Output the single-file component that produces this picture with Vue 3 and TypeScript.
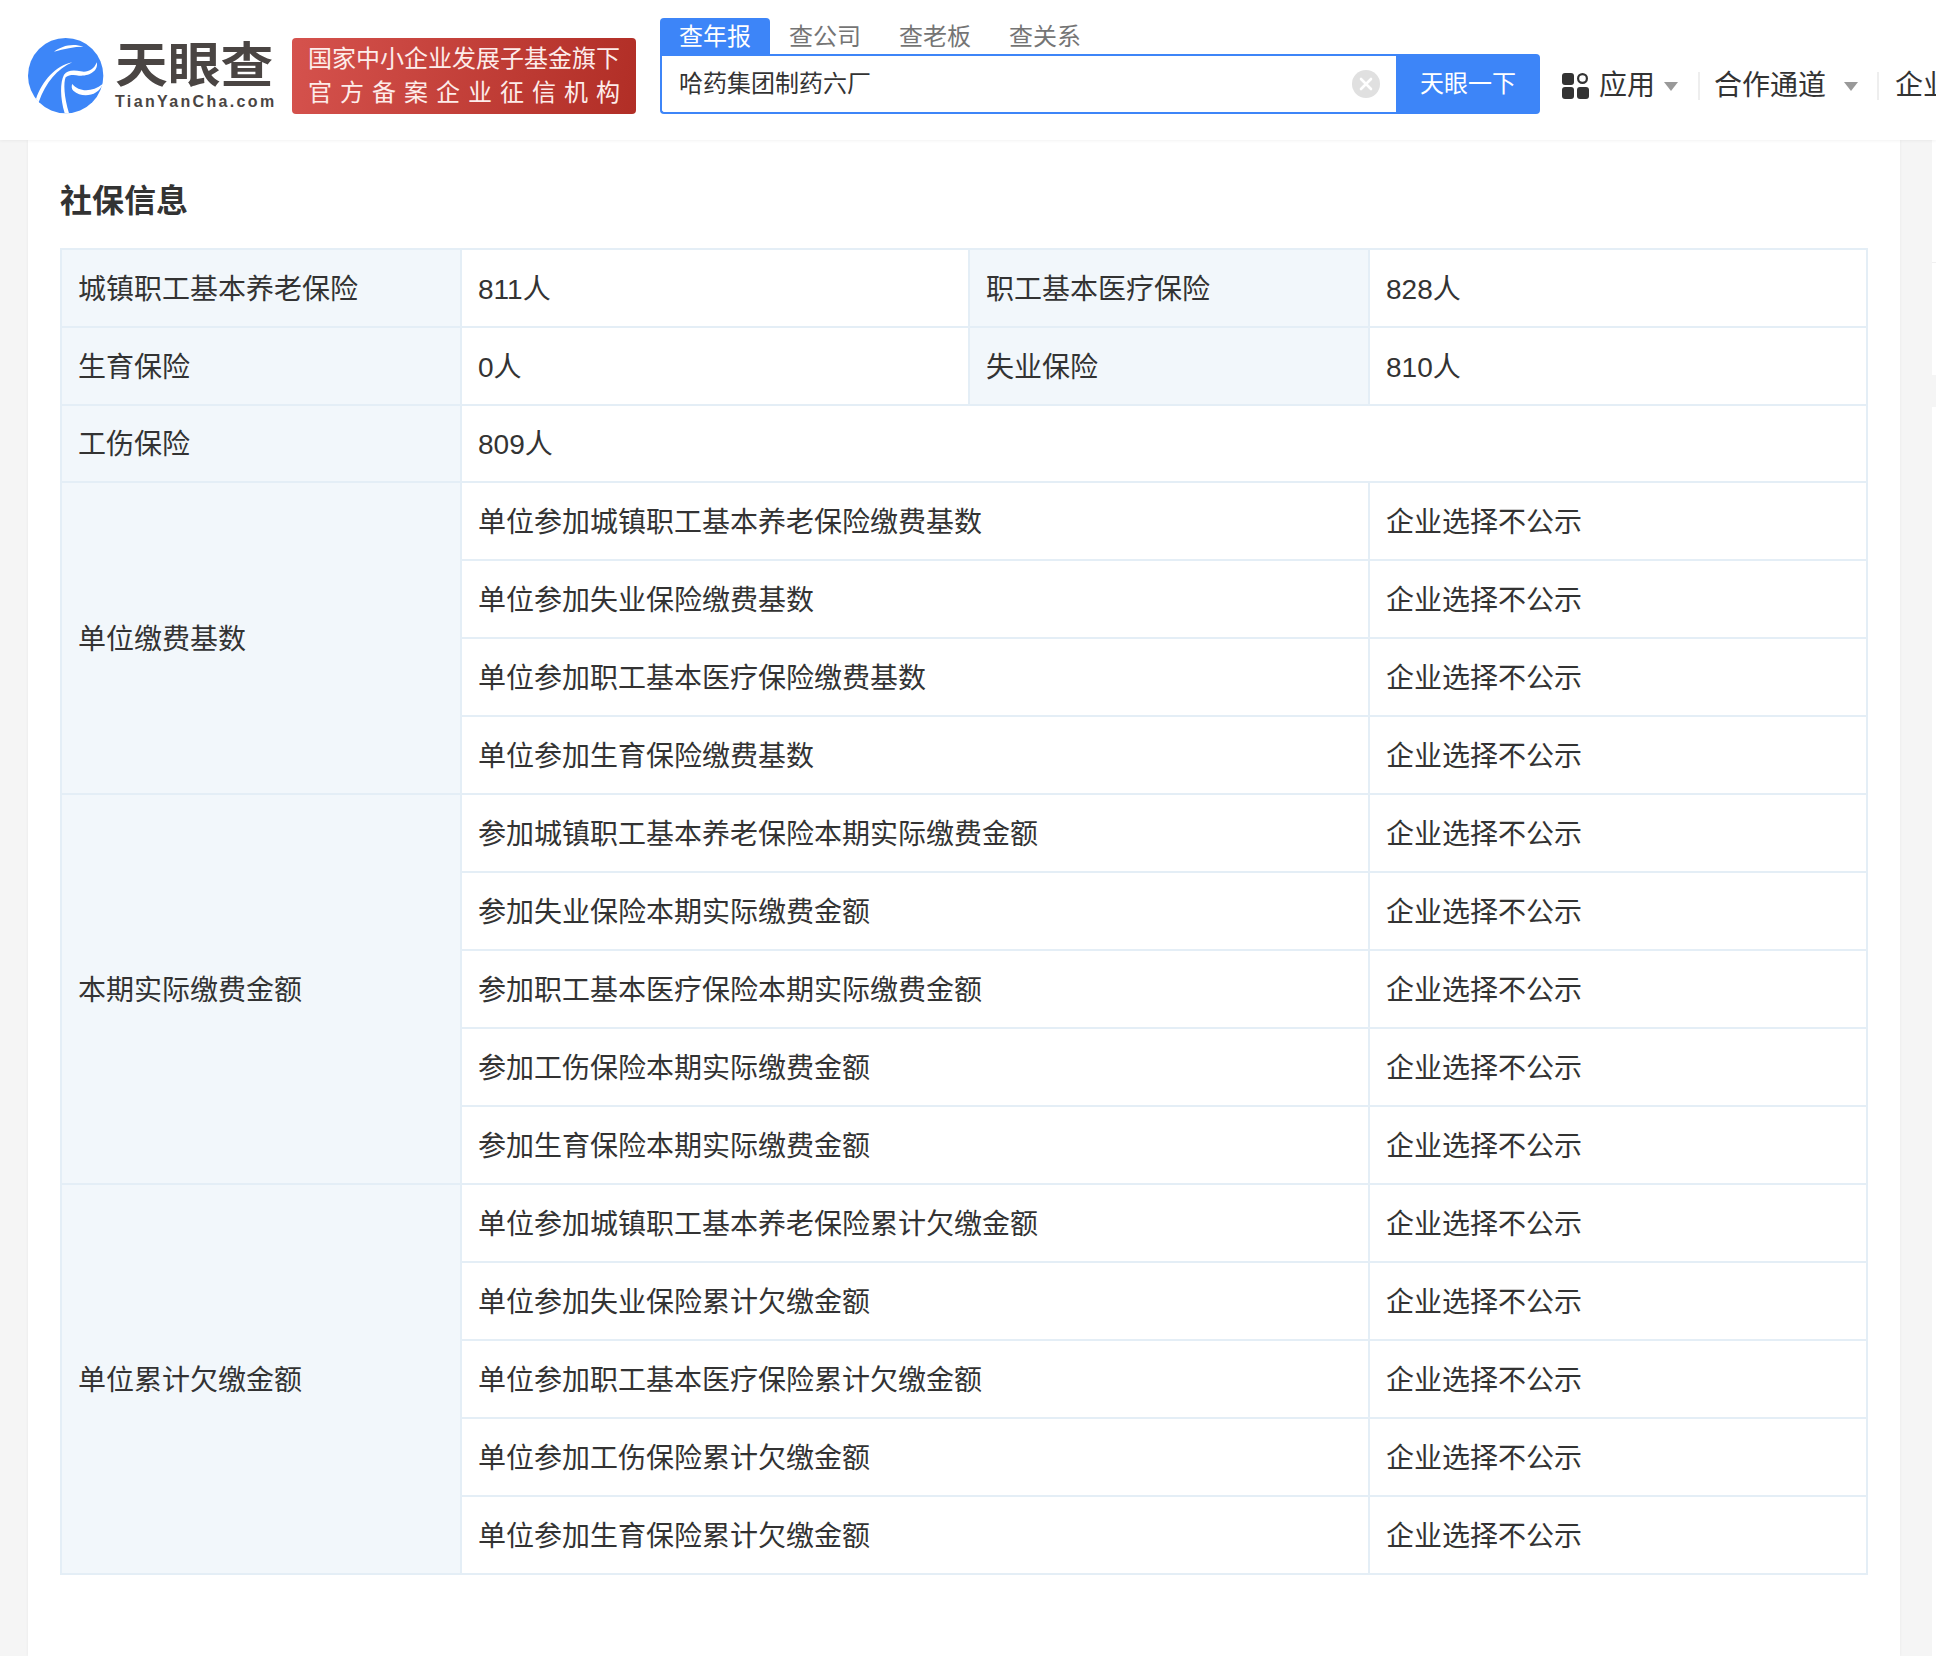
<script setup lang="ts">
interface Row { label?: string; span?: number; name: string; value: string }
const groups: { label: string; items: string[] }[] = [
  { label: '单位缴费基数', items: ['单位参加城镇职工基本养老保险缴费基数', '单位参加失业保险缴费基数', '单位参加职工基本医疗保险缴费基数', '单位参加生育保险缴费基数'] },
  { label: '本期实际缴费金额', items: ['参加城镇职工基本养老保险本期实际缴费金额', '参加失业保险本期实际缴费金额', '参加职工基本医疗保险本期实际缴费金额', '参加工伤保险本期实际缴费金额', '参加生育保险本期实际缴费金额'] },
  { label: '单位累计欠缴金额', items: ['单位参加城镇职工基本养老保险累计欠缴金额', '单位参加失业保险累计欠缴金额', '单位参加职工基本医疗保险累计欠缴金额', '单位参加工伤保险累计欠缴金额', '单位参加生育保险累计欠缴金额'] }
]
const rows: Row[] = groups.flatMap((g) =>
  g.items.map((name, i) => ({
    label: i === 0 ? g.label : undefined,
    span: i === 0 ? g.items.length : undefined,
    name,
    value: '企业选择不公示'
  }))
)
const tabs = ['查年报', '查公司', '查老板', '查关系']
</script>

<template>
  <div class="page">
    <header class="header">
      <div class="logo">
        <svg class="logo-mark" viewBox="0 0 252 252" width="84" height="84">
          <circle cx="125" cy="125" r="113" fill="#3d86f8" />
          <path fill="#fff" d="M90 53C112 36 145 26 178 38C150 38 120 44 90 53Z" />
          <path fill="#fff" d="M36 195C55 140 95 95 145 85C100 105 65 145 44 205Z" />
          <path fill="#fff" d="M218 85C225 110 195 128 165 125C150 122 135 122 125 130C118 145 120 190 135 238L122 238C108 190 108 145 120 122C130 108 150 108 170 112C190 116 210 108 218 85Z" />
          <path fill="#fff" d="M145 150C165 175 205 175 236 150C225 185 175 195 148 170C142 165 142 155 145 150Z" />
        </svg>
        <div class="logo-text">
          <div class="logo-cn">天眼查</div>
          <div class="logo-en">TianYanCha.com</div>
        </div>
      </div>
      <div class="badge">
        <div class="badge-line">国家中小企业发展子基金旗下</div>
        <div class="badge-line">官方备案企业征信机构</div>
      </div>
      <div class="search">
        <div class="tabs">
          <div v-for="(t, i) in tabs" :key="t" class="tab" :class="{ active: i === 0 }">{{ t }}</div>
        </div>
        <div class="box">
          <div class="input">
            <span class="query">哈药集团制药六厂</span>
            <svg class="clear" viewBox="0 0 28 28" width="28" height="28">
              <circle cx="14" cy="14" r="14" fill="#e0e0e0" />
              <path d="M9 9L19 19M19 9L9 19" stroke="#fff" stroke-width="2.6" stroke-linecap="round" />
            </svg>
          </div>
          <div class="btn">天眼一下</div>
        </div>
      </div>
      <nav class="nav">
        <svg class="apps" viewBox="0 0 27 26" width="27" height="26">
          <rect x="0" y="0" width="12" height="12" rx="3" fill="#333" />
          <circle cx="20.5" cy="5.5" r="4.4" fill="none" stroke="#333" stroke-width="2.2" />
          <rect x="0" y="14" width="12" height="12" rx="3" fill="#333" />
          <rect x="15" y="14" width="12" height="12" rx="3" fill="#333" />
        </svg>
        <span class="nav-text first">应用</span>
        <i class="caret"></i>
        <i class="divider"></i>
        <span class="nav-text second">合作通道</span>
        <i class="caret wide"></i>
        <i class="divider last"></i>
        <span class="nav-text third">企业</span>
      </nav>
    </header>
    <div class="main">
      <section class="card">
        <h2 class="title">社保信息</h2>
        <table class="table">
          <colgroup>
            <col class="c1" />
            <col class="c2" />
            <col class="c3" />
            <col class="c4" />
          </colgroup>
          <tbody>
            <tr>
              <td class="label">城镇职工基本养老保险</td>
              <td>811人</td>
              <td class="label">职工基本医疗保险</td>
              <td>828人</td>
            </tr>
            <tr>
              <td class="label">生育保险</td>
              <td>0人</td>
              <td class="label">失业保险</td>
              <td>810人</td>
            </tr>
            <tr class="short">
              <td class="label">工伤保险</td>
              <td colspan="3">809人</td>
            </tr>
            <tr v-for="r in rows" :key="r.name">
              <td v-if="r.label" class="label" :rowspan="r.span">{{ r.label }}</td>
              <td colspan="2">{{ r.name }}</td>
              <td>{{ r.value }}</td>
            </tr>
          </tbody>
        </table>
      </section>
      <aside class="aside">
        <div class="side-block first"></div>
        <div class="side-block second"></div>
        <div class="side-block third"></div>
      </aside>
    </div>
  </div>
</template>

<style scoped>
.page {
  width: 1936px;
  height: 1656px;
  overflow: hidden;
  background: #f5f5f5;
  font-family: "Liberation Sans", "Noto Sans CJK SC", sans-serif;
  color: #333;
}
.header {
  height: 140px;
  box-sizing: border-box;
  background: #fff;
  display: flex;
  align-items: flex-start;
  padding-left: 24px;
  white-space: nowrap;
  overflow: hidden;
  box-shadow: 0 1px 3px rgba(0, 0, 0, 0.05);
  position: relative;
}
.logo {
  display: flex;
  margin-top: 34px;
  width: 249px;
  flex: none;
}
.logo-mark {
  flex: none;
}
.logo-text {
  margin-left: 7px;
  width: 158px;
  color: #4a4543;
}
.logo-cn {
  font-size: 48px;
  line-height: 48px;
  height: 48px;
  margin-top: 3px;
  font-weight: 700;
  transform: scaleX(1.1);
  transform-origin: left center;
  font-family: "Noto Sans CJK SC", sans-serif;
}
.logo-en {
  margin-top: 7px;
  font-size: 16px;
  line-height: 20px;
  font-weight: 700;
  letter-spacing: 2.35px;
}
.badge {
  flex: none;
  width: 344px;
  height: 76px;
  box-sizing: border-box;
  margin-top: 38px;
  margin-left: 19px;
  padding: 4px 16px 0;
  border-radius: 4px;
  background: linear-gradient(100deg, #d5524d, #b12e26);
  color: #fdecea;
}
.badge-line {
  font-size: 24px;
  line-height: 34px;
  text-align: justify;
  text-align-last: justify;
}
.search {
  flex: none;
  width: 880px;
  margin-top: 18px;
  margin-left: 24px;
}
.tabs {
  display: flex;
  height: 36px;
}
.tab {
  width: 110px;
  height: 36px;
  font-size: 24px;
  line-height: 38px;
  text-align: center;
  color: #757575;
  border-radius: 4px 4px 0 0;
}
.tab.active {
  background: #3d85f8;
  color: #fff;
}
.box {
  display: flex;
  height: 60px;
}
.input {
  flex: 1;
  box-sizing: border-box;
  border: 2px solid #3d85f8;
  border-right: 0;
  border-radius: 0 0 0 4px;
  display: flex;
  align-items: center;
  justify-content: space-between;
  padding: 0 16px 0 17px;
  background: #fff;
}
.query {
  font-size: 24px;
  line-height: 30px;
  color: #333;
}
.btn {
  width: 144px;
  flex: none;
  background: #3d85f8;
  color: #fff;
  font-size: 24px;
  line-height: 60px;
  text-align: center;
  border-radius: 0 4px 4px 0;
}
.nav {
  flex: none;
  margin-left: 22px;
  margin-top: 71px;
  height: 30px;
  display: flex;
  align-items: center;
}
.apps {
  flex: none;
}
.nav-text {
  font-size: 28px;
  line-height: 30px;
  color: #333;
}
.nav-text.first {
  margin-left: 10px;
}
.nav-text.second {
  margin-left: 14px;
}
.nav-text.third {
  margin-left: 16px;
}
.caret {
  flex: none;
  width: 0;
  height: 0;
  margin-left: 9px;
  border-left: 7px solid transparent;
  border-right: 7px solid transparent;
  border-top: 9px solid #999;
}
.caret.wide {
  margin-left: 18px;
}
.divider {
  flex: none;
  width: 2px;
  height: 28px;
  margin-left: 20px;
  background: #eee;
}
.divider.last {
  margin-left: 19px;
}
.main {
  display: flex;
  height: 1516px;
  padding-left: 28px;
}
.card {
  flex: none;
  width: 1872px;
  box-sizing: border-box;
  padding: 41px 32px 0;
  background: #fff;
  box-shadow: 0 0 3px rgba(0, 0, 0, 0.06);
}
.title {
  margin: 0 0 27px;
  font-size: 32px;
  line-height: 40px;
  font-weight: 700;
  color: #333;
}
.table {
  width: 1806px;
  table-layout: fixed;
  border-collapse: collapse;
}
.c1 {
  width: 400px;
}
.c2 {
  width: 508px;
}
.c3 {
  width: 400px;
}
.c4 {
  width: 498px;
}
.table td {
  height: 78px;
  box-sizing: border-box;
  padding: 3px 16px 0;
  border: 2px solid #e4eef6;
  font-size: 28px;
  line-height: 40px;
  color: #333;
  vertical-align: middle;
  background: #fff;
}
.table tr.short td {
  height: 77px;
}
.table td.label {
  background: #f2f7fb;
}
.aside {
  flex: none;
  width: 40px;
  margin-left: 32px;
  display: flex;
  flex-direction: column;
}
.side-block {
  background: #fff;
}
.side-block.first {
  height: 122px;
  border-bottom: 1px solid #f0f0f0;
}
.side-block.second {
  height: 112px;
  margin-bottom: 32px;
}
.side-block.third {
  flex: 1;
}
</style>

<style>
html,
body {
  margin: 0;
  background: #f5f5f5;
}
</style>
